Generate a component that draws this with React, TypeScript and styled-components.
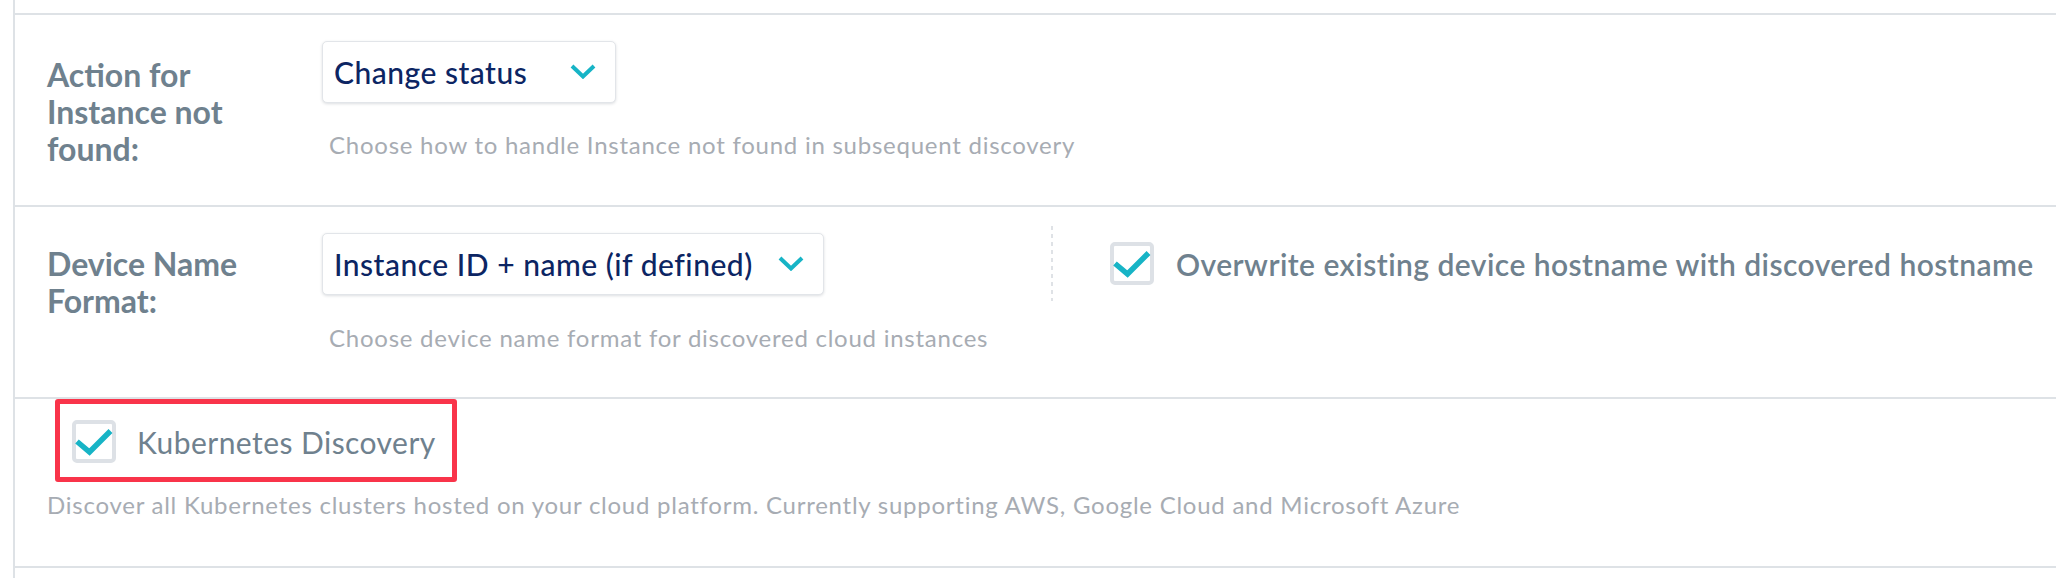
import React from "react";
import styled, { createGlobalStyle } from "styled-components";

const Global = createGlobalStyle`
  html, body { margin: 0; padding: 0; background: #ffffff; }
  body { font-family: Lato, "Noto Sans", sans-serif; -webkit-font-smoothing: antialiased; }
  *, *::before, *::after { box-sizing: border-box; }
`;

const LINE = "#dee2e6";
const SLATE = "#6f818e";
const HINT = "#a7acb3";
const NAVY = "#0c2563";
const TEAL = "#17b4c6";

const Panel = styled.div`
  margin-left: 13px;
  border-left: 2px solid ${LINE};
  padding-top: 13px;
  height: 578px;
`;

const Row = styled.section<{ $h: number; $last?: boolean }>`
  height: ${(p) => p.$h}px;
  border-top: 2px solid ${LINE};
  border-bottom: ${(p) => (p.$last ? `2px solid ${LINE}` : "none")};
  padding-left: 32px;
`;

const FieldGrid = styled.div`
  display: grid;
  grid-template-columns: 230px 1fr;
  column-gap: 45px;
`;

const Label = styled.div<{ $top: number }>`
  padding-top: ${(p) => p.$top}px;
  font-weight: 700;
  font-size: 32px;
  line-height: 37px;
  color: ${SLATE};
`;

const Field = styled.div`
  padding-top: 19px;
`;

const TopLine = styled.div`
  display: flex;
  align-items: center;
  min-height: 75px;
`;

const Select = styled.div<{ $w: number }>`
  width: ${(p) => p.$w}px;
  height: 62px;
  display: flex;
  align-items: center;
  justify-content: space-between;
  padding: 0 19px 0 11px;
  background: #fff;
  border: 1px solid #e2e5e9;
  border-radius: 5px;
  box-shadow: 0 1px 3px rgba(40, 50, 70, 0.16);
  font-size: 30px;
  font-weight: 500;
  letter-spacing: 0.5px;
  color: ${NAVY};
  white-space: nowrap;
`;

const Hint = styled.div<{ $mt: number; $ml: number }>`
  margin-top: ${(p) => p.$mt}px;
  margin-left: ${(p) => p.$ml}px;
  font-size: 24px;
  line-height: 30px;
  letter-spacing: 0.75px;
  color: ${HINT};
  white-space: nowrap;
`;

const Divided = styled.div`
  margin-left: 227px;
  height: 75px;
  padding-left: 59px;
  display: flex;
  align-items: center;
  gap: 22px;
  background-image: linear-gradient(to bottom, #dfe2e6 0 4px, transparent 4px 8px);
  background-size: 2px 8px;
  background-repeat: repeat-y;
  background-position: left top;
`;

const CheckText = styled.span<{ $weight: number }>`
  font-size: 30px;
  font-weight: ${(p) => p.$weight};
  letter-spacing: 0.45px;
  color: ${SLATE};
  white-space: nowrap;
`;

const Highlight = styled.div`
  display: inline-flex;
  align-items: center;
  gap: 21px;
  margin-left: 8px;
  padding: 16px 16px 14px 12px;
  border: 5px solid #f9344a;
  border-radius: 3px;
`;

const Box = styled.span`
  position: relative;
  display: inline-block;
  flex: none;
  width: 44px;
  height: 43px;
  border: 4px solid #dde1e6;
  border-radius: 5px;
  background: #fff;
`;

const CheckMark = styled.svg`
  position: absolute;
  left: -4px;
  top: -4px;
  overflow: visible;
`;

const Chevron = () => (
  <svg width="26" height="15" viewBox="0 0 26 15" style={{ flex: "none" }}>
    <polyline points="2,2 13,12.5 24,2" fill="none" stroke={TEAL} strokeWidth="4" />
  </svg>
);

const Checkbox = () => (
  <Box>
    <CheckMark width="44" height="43" viewBox="0 0 44 43">
      <polyline points="5,21.5 17.5,32 38.5,11" fill="none" stroke={TEAL} strokeWidth="5.5" />
    </CheckMark>
  </Box>
);

export default function App() {
  return (
    <>
      <Global />
      <Panel>
        <Row $h={192}>
          <FieldGrid>
            <Label $top={41}>Action for Instance not found:</Label>
            <Field>
              <TopLine>
                <Select $w={294}>
                  <span>Change status</span>
                  <Chevron />
                </Select>
              </TopLine>
              <Hint $mt={21} $ml={7}>Choose how to handle Instance not found in subsequent discovery</Hint>
            </Field>
          </FieldGrid>
        </Row>
        <Row $h={192}>
          <FieldGrid>
            <Label $top={38}>Device Name Format:</Label>
            <Field>
              <TopLine>
                <Select $w={502}>
                  <span>Instance ID + name (if defined)</span>
                  <Chevron />
                </Select>
                <Divided>
                  <Checkbox />
                  <CheckText $weight={600}>Overwrite existing device hostname with discovered hostname</CheckText>
                </Divided>
              </TopLine>
              <Hint $mt={22} $ml={7}>Choose device name format for discovered cloud instances</Hint>
            </Field>
          </FieldGrid>
        </Row>
        <Row $h={171} $last>
          <Highlight>
            <Checkbox />
            <CheckText $weight={400}>Kubernetes Discovery</CheckText>
          </Highlight>
          <Hint $mt={8} $ml={0}>
            Discover all Kubernetes clusters hosted on your cloud platform. Currently supporting AWS, Google Cloud and Microsoft Azure
          </Hint>
        </Row>
      </Panel>
    </>
  );
}
